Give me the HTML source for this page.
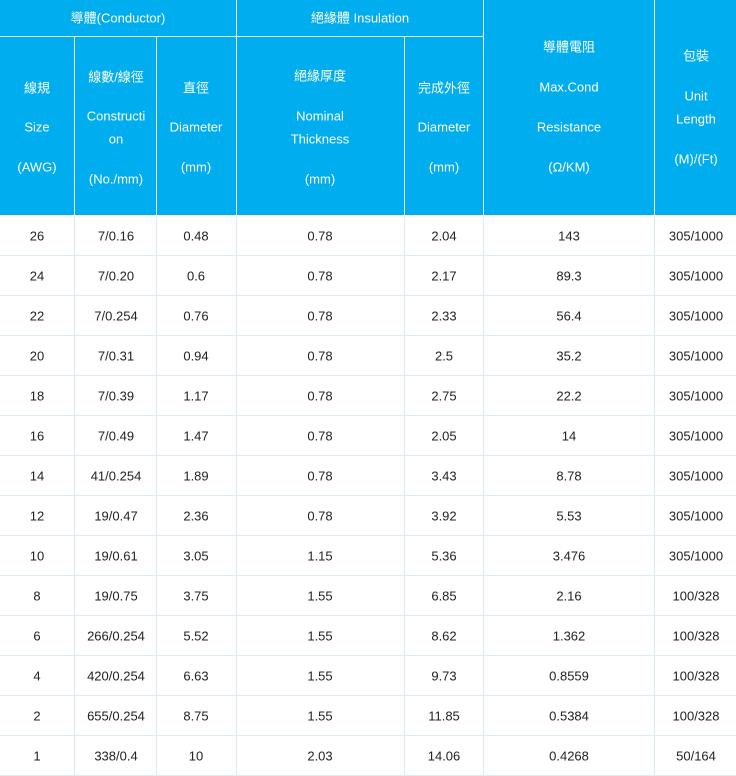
<!DOCTYPE html>
<html><head><meta charset="utf-8"><style>
body{margin:0;width:736px;height:776px;position:relative;background:#fff;font-family:"Liberation Sans","Noto Sans CJK TC",sans-serif;overflow:hidden}
.h{position:absolute;background:#00aeef}
.t{position:absolute;transform:translate(-50%,-50%);white-space:nowrap;font-size:13px}
.w{color:#fff}
.d{color:#222}
.vl{position:absolute;width:1px;background:#dcebf2}
.hl{position:absolute;height:1px;background:#dcebf2;left:0;width:736px}
.wl{position:absolute;background:#e6f4fb}
</style></head><body>
<div class="h" style="left:0;top:0;width:736px;height:215px"></div>
<div class="wl" style="left:0;top:36px;width:484px;height:1px"></div>
<div class="wl" style="left:236px;top:0;width:1px;height:215px"></div>
<div class="wl" style="left:483px;top:0;width:1px;height:215px"></div>
<div class="wl" style="left:654px;top:0;width:1px;height:215px"></div>
<div class="wl" style="left:74px;top:37px;width:1px;height:178px"></div>
<div class="wl" style="left:156px;top:37px;width:1px;height:178px"></div>
<div class="wl" style="left:404px;top:37px;width:1px;height:178px"></div>
<div id="hdr"></div>
<div id="body"></div>
<script>
var H=[
[118,17,"導體(Conductor)"],[360,17,"絕緣體 Insulation"],
[37,87,"線規"],[37,127,"Size"],[37,167,"(AWG)"],
[116,76,"線數/線徑"],[116,116,"Constructi"],[116,139,"on"],[116,179,"(No./mm)"],
[196,87,"直徑"],[196,127,"Diameter"],[196,167,"(mm)"],
[320,75,"絕緣厚度"],[320,116,"Nominal"],[320,139,"Thickness"],[320,179,"(mm)"],
[444,87,"完成外徑"],[444,127,"Diameter"],[444,167,"(mm)"],
[569,46,"導體電阻"],[569,87,"Max.Cond"],[569,127,"Resistance"],[569,167,"(Ω/KM)"],
[696,55,"包裝"],[696,96,"Unit"],[696,119,"Length"],[696,159,"(M)/(Ft)"]];
var s="";H.forEach(function(a){s+='<div class="t w" style="left:'+a[0]+'px;top:'+a[1]+'px">'+a[2]+'</div>'});
var R=[["26","7/0.16","0.48","0.78","2.04","143","305/1000"],["24","7/0.20","0.6","0.78","2.17","89.3","305/1000"],["22","7/0.254","0.76","0.78","2.33","56.4","305/1000"],["20","7/0.31","0.94","0.78","2.5","35.2","305/1000"],["18","7/0.39","1.17","0.78","2.75","22.2","305/1000"],["16","7/0.49","1.47","0.78","2.05","14","305/1000"],["14","41/0.254","1.89","0.78","3.43","8.78","305/1000"],["12","19/0.47","2.36","0.78","3.92","5.53","305/1000"],["10","19/0.61","3.05","1.15","5.36","3.476","305/1000"],["8","19/0.75","3.75","1.55","6.85","2.16","100/328"],["6","266/0.254","5.52","1.55","8.62","1.362","100/328"],["4","420/0.254","6.63","1.55","9.73","0.8559","100/328"],["2","655/0.254","8.75","1.55","11.85","0.5384","100/328"],["1","338/0.4","10","2.03","14.06","0.4268","50/164"]];
var X=[37,116,196,320,444,569,696];
R.forEach(function(r,i){var y=236+i*40;r.forEach(function(v,j){s+='<div class="t d" style="left:'+X[j]+'px;top:'+y+'px">'+v+'</div>'});s+='<div class="hl" style="top:'+(255+i*40)+'px"></div>'});
[74,156,236,404,483,654].forEach(function(x){s+='<div class="vl" style="left:'+x+'px;top:215px;height:561px"></div>'});
document.getElementById('hdr').innerHTML=s;
</script>
</body></html>
